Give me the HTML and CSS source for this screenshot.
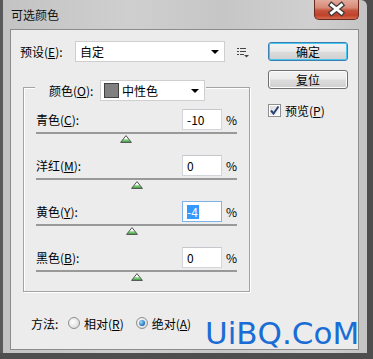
FILE: index.html
```html
<!DOCTYPE html>
<html>
<head>
<meta charset="utf-8">
<link rel="stylesheet" href="styles.css">
</head>
<body>
<svg width="0" height="0" class="defs">
  <defs>
    <linearGradient id="tg" x1="0" y1="0" x2="0" y2="1">
      <stop offset="0" stop-color="#ffffff"/>
      <stop offset="0.45" stop-color="#f4fbf3"/>
      <stop offset="0.6" stop-color="#8fd88a"/>
      <stop offset="1" stop-color="#2f9e3a"/>
    </linearGradient>
  </defs>
</svg>
<div class="win">
  <div class="titlebar">
    <span class="title">可选颜色</span>
    <div class="close">
      <svg width="45" height="20" viewBox="0 0 45 20">
        <path d="M18 6 L28 14 M28 6 L18 14" stroke="#3b3b3b" stroke-width="5.5" stroke-linecap="square"/>
        <path d="M18 6 L28 14 M28 6 L18 14" stroke="#ffffff" stroke-width="3" stroke-linecap="square"/>
      </svg>
    </div>
  </div>
  <div class="client">
    <div class="left">
      <div class="preset-row">
        <span class="lbl preset-lbl">预设(<u>E</u>):</span>
        <div class="select preset"><span class="sel-text">自定</span><i class="arrow"></i></div>
        <svg class="menu-icon" width="12" height="10" viewBox="0 0 12 10">
          <rect x="0" y="0" width="2" height="1" fill="#444"/>
          <rect x="3" y="0" width="6" height="1" fill="#444"/>
          <rect x="0" y="3" width="2" height="1" fill="#444"/>
          <rect x="3" y="3" width="6" height="1" fill="#444"/>
          <rect x="0" y="6" width="2" height="1" fill="#444"/>
          <rect x="3" y="6" width="4" height="1" fill="#444"/>
          <path d="M7 7 L12 7 L9.5 9.5 Z" fill="#444"/>
        </svg>
      </div>
      <div class="group">
        <div class="legend">
          <span class="lbl legend-lbl">颜色(<u>O</u>):</span>
          <div class="select color"><span class="swatch"></span><span class="sel-text">中性色</span><i class="arrow"></i></div>
        </div>
        <div class="slider">
          <div class="slider-top"><span class="lbl">青色(<u>C</u>):</span><span class="num">-10</span><span class="pct">%</span></div>
          <div class="track"><span class="thumb" style="left:45%"><svg width="12" height="8" viewBox="0 0 12 8"><path d="M6 0.6 L11.4 7.4 L0.6 7.4 Z" fill="url(#tg)" stroke="#505050" stroke-width="1" stroke-linejoin="round"/></svg></span></div>
        </div>
        <div class="slider">
          <div class="slider-top"><span class="lbl">洋红(<u>M</u>):</span><span class="num">0</span><span class="pct">%</span></div>
          <div class="track"><span class="thumb" style="left:50%"><svg width="12" height="8" viewBox="0 0 12 8"><path d="M6 0.6 L11.4 7.4 L0.6 7.4 Z" fill="url(#tg)" stroke="#505050" stroke-width="1" stroke-linejoin="round"/></svg></span></div>
        </div>
        <div class="slider">
          <div class="slider-top"><span class="lbl">黄色(<u>Y</u>):</span><span class="num focus"><span class="selected">-4</span></span><span class="pct">%</span></div>
          <div class="track"><span class="thumb" style="left:48%"><svg width="12" height="8" viewBox="0 0 12 8"><path d="M6 0.6 L11.4 7.4 L0.6 7.4 Z" fill="url(#tg)" stroke="#505050" stroke-width="1" stroke-linejoin="round"/></svg></span></div>
        </div>
        <div class="slider">
          <div class="slider-top"><span class="lbl">黑色(<u>B</u>):</span><span class="num">0</span><span class="pct">%</span></div>
          <div class="track"><span class="thumb" style="left:50%"><svg width="12" height="8" viewBox="0 0 12 8"><path d="M6 0.6 L11.4 7.4 L0.6 7.4 Z" fill="url(#tg)" stroke="#505050" stroke-width="1" stroke-linejoin="round"/></svg></span></div>
        </div>
      </div>
      <div class="method">
        <span class="lbl method-lbl">方法:</span>
        <span class="radio"></span><span class="lbl radio-text">相对(<u>R</u>)</span>
        <span class="radio on"></span><span class="lbl radio-text">绝对(<u>A</u>)</span>
      </div>
    </div>
    <div class="right">
      <div class="btn default">确定</div>
      <div class="btn">复位</div>
      <div class="check-row">
        <svg class="check" width="13" height="13" viewBox="0 0 13 13">
          <defs><linearGradient id="cg" x1="0" y1="0" x2="1" y2="1"><stop offset="0" stop-color="#dcdcdc"/><stop offset="1" stop-color="#f8f8f8"/></linearGradient></defs>
          <rect x="0.5" y="0.5" width="12" height="12" fill="#fff" stroke="#8f8f8f"/>
          <rect x="2" y="2" width="9" height="9" fill="url(#cg)"/>
          <path d="M3 6.5 L5.5 9.5 L10.5 2.5" fill="none" stroke="#2a4478" stroke-width="2"/>
        </svg>
        <span class="lbl">预览(<u>P</u>)</span>
      </div>
    </div>
  </div>
  <div class="watermark">UiBQ.CoM</div>
</div>
</body>
</html>
```
FILE: styles.css
```css
* { box-sizing: border-box; }
html, body { margin: 0; padding: 0; }
body {
  width: 373px;
  height: 359px;
  background: #4e4e4e;
  font-family: "Noto Sans CJK SC", "Microsoft YaHei", sans-serif;
  font-size: 12px;
  color: #000;
  overflow: hidden;
}
.defs { position: absolute; width: 0; height: 0; }
.win {
  position: relative;
  width: 367px;
  height: 353px;
  border-left: 3px solid #5a5a5a;
  border-top-right-radius: 6px;
  background: linear-gradient(90deg, #c3c3c3, #cfcfcf 35%, #c6c6c6 60%, #d0d0d0 85%, #c4c4c4);
}
.titlebar {
  height: 29px;
  display: flex;
  align-items: flex-start;
}
.title {
  padding: 7px 0 0 8px;
  line-height: 16px;
  font-size: 12px;
  color: #111;
}
.close {
  margin-left: auto;
  margin-right: 8px;
  width: 45px;
  height: 20px;
  border: 1px solid #6b2a1e;
  border-top: none;
  border-radius: 0 0 5px 5px;
  background: linear-gradient(180deg, #e2aa9c 0%, #d88a76 40%, #c7553d 55%, #c0412a 80%, #d56a4f 100%);
  display: flex;
}
.close svg { display: block; margin: -1px 0 0 -1px; }
.client {
  margin-left: 7px;
  width: 349px;
  height: 321px;
  border: 1px solid #8c8c8c;
  background: #ececec;
  display: flex;
}
.left {
  padding: 11px 0 0 9px;
  display: flex;
  flex-direction: column;
}
.lbl u { text-decoration: underline; text-underline-offset: 1px; }
.preset-row {
  display: flex;
  align-items: center;
  height: 21px;
}
.preset-lbl { width: 55px; }
.select {
  height: 21px;
  background: #fff;
  border: 1px solid #cfcfcf;
  display: flex;
  align-items: center;
  position: relative;
}
.preset { width: 150px; padding-left: 4px; }
.sel-text { line-height: 19px; }
.arrow {
  margin-left: auto;
  margin-right: 5px;
  width: 0;
  height: 0;
  border-left: 4px solid transparent;
  border-right: 4px solid transparent;
  border-top: 4px solid #000;
}
.menu-icon { margin-left: 12px; margin-top: 3px; }
.group {
  margin: 25px 0 0 3px;
  width: 227px;
  height: 205px;
  border: 1px solid #a3a3a3;
  box-shadow: 1px 1px 0 #fff, inset 1px 1px 0 #fff;
  padding: 0 12px 19px 12px;
  display: flex;
  flex-direction: column;
}
.legend {
  align-self: flex-start;
  margin: -8px 0 0 -1px;
  padding: 0 1px 0 14px;
  background: #ececec;
  display: flex;
  align-items: center;
  height: 21px;
}
.legend-lbl { width: 51px; }
.color { width: 105px; padding-left: 3px; }
.swatch {
  width: 15px;
  height: 15px;
  background: #808080;
  border: 1px solid #404040;
  margin-right: 3px;
}
.slider { margin-top: 8px; }
.slider + .slider { margin-top: 21px; }
.slider-top {
  display: flex;
  align-items: center;
  height: 21px;
}
.slider-top .lbl { flex: 1; }
.num {
  width: 40px;
  height: 21px;
  background: #fff;
  border: 1px solid #d2d6da;
  border-top-color: #c4c8cc;
  padding-left: 4px;
  line-height: 19px;
  font-size: 12px;
}
.num.focus { border-color: #7eb4ea; }
.selected {
  display: inline-block;
  background: #3399ff;
  color: #fff;
  line-height: 14px;
  padding-right: 1px;
}
.pct { width: 11px; margin-left: 4px; font-size: 12px; }
.track {
  position: relative;
  margin-top: 2px;
  height: 2px;
  background: #999;
}
.thumb {
  position: absolute;
  top: 3px;
  width: 12px;
  height: 8px;
  margin-left: -6px;
}
.thumb svg { display: block; }
.method {
  margin: 23px 0 0 11px;
  height: 16px;
  display: flex;
  align-items: center;
}
.method-lbl { width: 37px; }
.radio {
  width: 12px;
  height: 12px;
  border-radius: 50%;
  border: 1px solid #8e8f8f;
  background: radial-gradient(circle at 40% 40%, #ffffff, #e3e3e3 60%, #cfcfcf);
  display: flex;
  align-items: center;
  justify-content: center;
}
.radio.on::after {
  content: "";
  width: 6px;
  height: 6px;
  border-radius: 50%;
  background: radial-gradient(circle at 35% 35%, #9fe0ff, #2a7cc4 60%, #0f3f7c);
}
.radio-text { margin-left: 4px; }
.radio-text + .radio { margin-left: 12px; }
.right {
  margin-left: auto;
  padding: 12px 10px 0 0;
  display: flex;
  flex-direction: column;
  width: 90px;
}
.btn {
  width: 80px;
  height: 19px;
  border: 1px solid #707070;
  border-radius: 3px;
  background: linear-gradient(180deg, #f2f2f2 0%, #ebebeb 48%, #dddddd 52%, #cfcfcf 100%);
  text-align: center;
  line-height: 17px;
  box-shadow: inset 0 0 0 1px #fcfcfc;
}
.btn.default {
  border-color: #3c7fb1;
  box-shadow: inset 0 0 0 1px #48c6f2;
}
.btn + .btn { margin-top: 9px; }
.check-row {
  margin-top: 14px;
  display: flex;
  align-items: center;
  height: 14px;
}
.check { margin-right: 4px; }
.watermark {
  position: absolute;
  left: 202px;
  top: 318px;
  font-family: "DejaVu Sans", sans-serif;
  font-size: 31px;
  line-height: 31px;
  color: #1b6dd6;
  white-space: nowrap;
}
```
